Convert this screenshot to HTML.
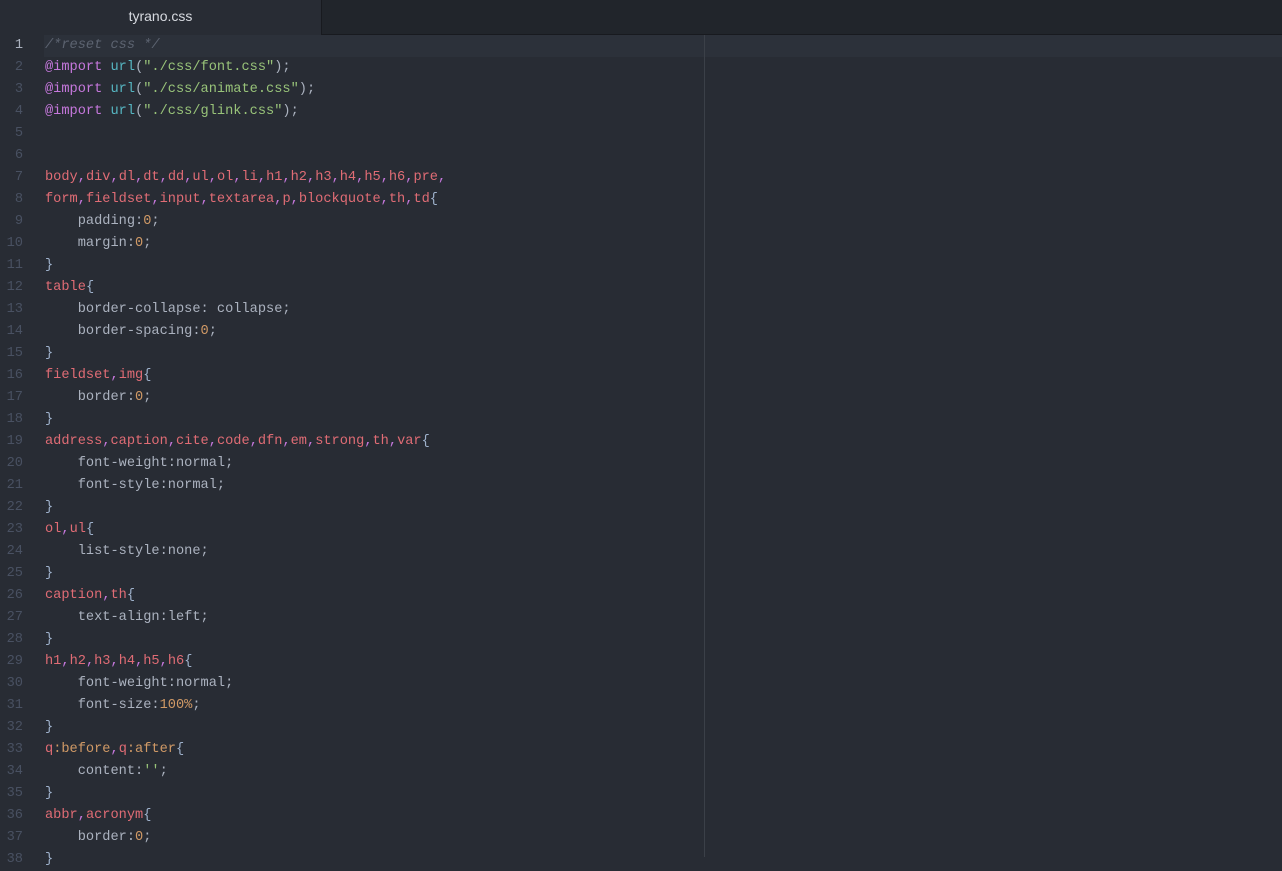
<!DOCTYPE html>
<html><head><meta charset="utf-8"><style>
html,body{margin:0;padding:0;width:1282px;height:857px;overflow:hidden;background:#282c34;}
.tabbar{position:absolute;left:0;top:0;width:1282px;height:34px;background:#21252b;border-bottom:1px solid #181a1f;}
.tab{position:absolute;left:0;top:0;width:321px;height:35px;background:#282c34;border-right:1px solid #181a1f;color:#d7dae0;font:14px "Liberation Sans",sans-serif;text-align:center;line-height:33px;}
.guide{position:absolute;left:704px;top:35px;width:1px;height:822px;background:#3b4048;}
.hl{position:absolute;left:44px;top:35px;width:1238px;height:22px;background:#2c313a;}
.lines{position:absolute;left:0;top:35px;font:13.65px/22px "Liberation Mono",monospace;color:#abb2bf;white-space:pre;}
.ln{display:inline-block;width:23px;text-align:right;color:#495162;margin-right:22px;}
.ln.a{color:#abb2bf;}
.r{color:#e06c75}.c{color:#c678dd}.b{color:#9fb2cc}.o{color:#d19a66}.g{color:#98c379}.u{color:#56b6c2}.m{color:#5c6370;font-style:italic}
</style></head><body>
<div class="tabbar"><div class="tab">tyrano.css</div></div>
<div class="hl"></div>
<div class="guide"></div>
<div class="lines"><div><span class="ln a">1</span><span class="m">/*reset css */</span></div><div><span class="ln">2</span><span class="c">@import</span> <span class="u">url</span>(<span class="g">"./css/font.css"</span>);</div><div><span class="ln">3</span><span class="c">@import</span> <span class="u">url</span>(<span class="g">"./css/animate.css"</span>);</div><div><span class="ln">4</span><span class="c">@import</span> <span class="u">url</span>(<span class="g">"./css/glink.css"</span>);</div><div><span class="ln">5</span></div><div><span class="ln">6</span></div><div><span class="ln">7</span><span class="r">body</span><span class="c">,</span><span class="r">div</span><span class="c">,</span><span class="r">dl</span><span class="c">,</span><span class="r">dt</span><span class="c">,</span><span class="r">dd</span><span class="c">,</span><span class="r">ul</span><span class="c">,</span><span class="r">ol</span><span class="c">,</span><span class="r">li</span><span class="c">,</span><span class="r">h1</span><span class="c">,</span><span class="r">h2</span><span class="c">,</span><span class="r">h3</span><span class="c">,</span><span class="r">h4</span><span class="c">,</span><span class="r">h5</span><span class="c">,</span><span class="r">h6</span><span class="c">,</span><span class="r">pre</span><span class="c">,</span></div><div><span class="ln">8</span><span class="r">form</span><span class="c">,</span><span class="r">fieldset</span><span class="c">,</span><span class="r">input</span><span class="c">,</span><span class="r">textarea</span><span class="c">,</span><span class="r">p</span><span class="c">,</span><span class="r">blockquote</span><span class="c">,</span><span class="r">th</span><span class="c">,</span><span class="r">td</span><span class="b">{</span></div><div><span class="ln">9</span>    padding:<span class="o">0</span>;</div><div><span class="ln">10</span>    margin:<span class="o">0</span>;</div><div><span class="ln">11</span><span class="b">}</span></div><div><span class="ln">12</span><span class="r">table</span><span class="b">{</span></div><div><span class="ln">13</span>    border-collapse: collapse;</div><div><span class="ln">14</span>    border-spacing:<span class="o">0</span>;</div><div><span class="ln">15</span><span class="b">}</span></div><div><span class="ln">16</span><span class="r">fieldset</span><span class="c">,</span><span class="r">img</span><span class="b">{</span></div><div><span class="ln">17</span>    border:<span class="o">0</span>;</div><div><span class="ln">18</span><span class="b">}</span></div><div><span class="ln">19</span><span class="r">address</span><span class="c">,</span><span class="r">caption</span><span class="c">,</span><span class="r">cite</span><span class="c">,</span><span class="r">code</span><span class="c">,</span><span class="r">dfn</span><span class="c">,</span><span class="r">em</span><span class="c">,</span><span class="r">strong</span><span class="c">,</span><span class="r">th</span><span class="c">,</span><span class="r">var</span><span class="b">{</span></div><div><span class="ln">20</span>    font-weight:normal;</div><div><span class="ln">21</span>    font-style:normal;</div><div><span class="ln">22</span><span class="b">}</span></div><div><span class="ln">23</span><span class="r">ol</span><span class="c">,</span><span class="r">ul</span><span class="b">{</span></div><div><span class="ln">24</span>    list-style:none;</div><div><span class="ln">25</span><span class="b">}</span></div><div><span class="ln">26</span><span class="r">caption</span><span class="c">,</span><span class="r">th</span><span class="b">{</span></div><div><span class="ln">27</span>    text-align:left;</div><div><span class="ln">28</span><span class="b">}</span></div><div><span class="ln">29</span><span class="r">h1</span><span class="c">,</span><span class="r">h2</span><span class="c">,</span><span class="r">h3</span><span class="c">,</span><span class="r">h4</span><span class="c">,</span><span class="r">h5</span><span class="c">,</span><span class="r">h6</span><span class="b">{</span></div><div><span class="ln">30</span>    font-weight:normal;</div><div><span class="ln">31</span>    font-size:<span class="o">100%</span>;</div><div><span class="ln">32</span><span class="b">}</span></div><div><span class="ln">33</span><span class="r">q</span><span class="o">:before</span><span class="c">,</span><span class="r">q</span><span class="o">:after</span><span class="b">{</span></div><div><span class="ln">34</span>    content:<span class="g">''</span>;</div><div><span class="ln">35</span><span class="b">}</span></div><div><span class="ln">36</span><span class="r">abbr</span><span class="c">,</span><span class="r">acronym</span><span class="b">{</span></div><div><span class="ln">37</span>    border:<span class="o">0</span>;</div><div><span class="ln">38</span><span class="b">}</span></div></div>
</body></html>
